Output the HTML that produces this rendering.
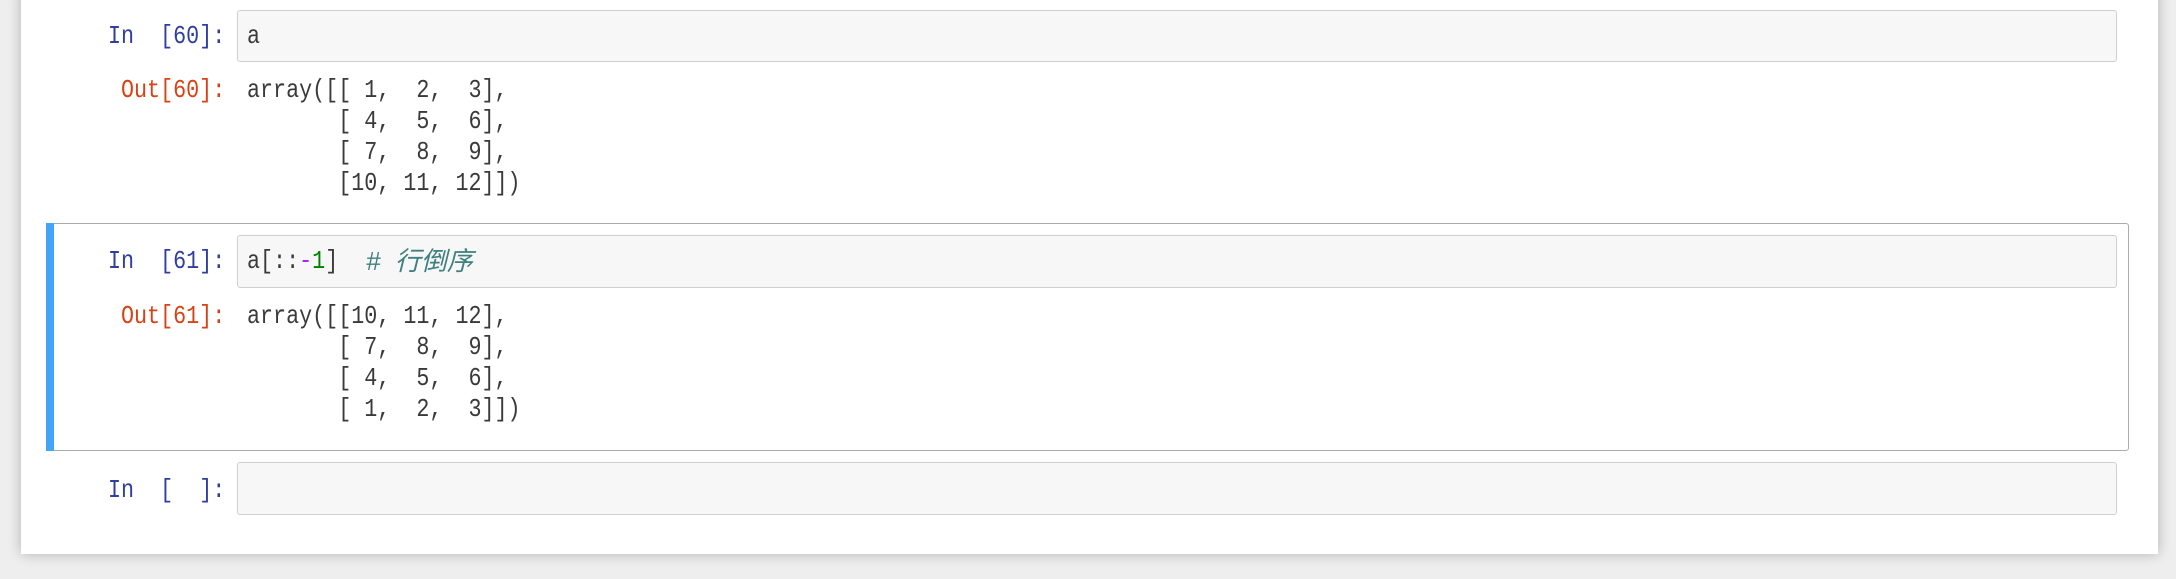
<!DOCTYPE html>
<html><head><meta charset="utf-8"><style>
html,body{margin:0;padding:0;width:2176px;height:579px;background:#eeeeee;overflow:hidden}
.panel{position:absolute;left:21px;top:-10px;width:2137px;height:564px;background:#fff;box-shadow:0 0 12px rgba(0,0,0,.25)}
.box{position:absolute;left:237px;width:1880px;background:#f7f7f7;border:1px solid #cfcfcf;border-radius:3px;box-sizing:border-box}
.sel{position:absolute;left:46px;top:223px;width:2083px;height:228px;border:1px solid #ababab;border-radius:3px;box-sizing:border-box}
.bar{position:absolute;left:46px;top:223px;width:8px;height:228px;background:#42a5f5}
.t{position:absolute;font:26px/32px "Liberation Mono","Noto Sans CJK SC",monospace;white-space:pre;transform:scaleX(.835);transform-origin:0 50%;color:#3a3a3a}
.in{color:#303f9f}.out{color:#d84315}
.c{position:absolute;font:italic 26px/32px "Liberation Sans","Noto Sans CJK SC",sans-serif;color:#408080;white-space:pre}
</style></head><body>
<div class="panel"></div>
<div class="box" style="top:10px;height:52px"></div>
<div class="t in" style="left:108px;top:20px">In  [60]:</div>
<div class="t" style="left:247px;top:20px">a</div>
<div class="t out" style="left:121px;top:74px">Out[60]:</div>
<div class="t" style="left:247px;top:74px">array([[ 1,  2,  3],</div>
<div class="t" style="left:247px;top:105px">       [ 4,  5,  6],</div>
<div class="t" style="left:247px;top:136px">       [ 7,  8,  9],</div>
<div class="t" style="left:247px;top:167px">       [10, 11, 12]])</div>

<div class="sel"></div><div class="bar"></div>
<div class="box" style="top:235px;height:53px"></div>
<div class="t in" style="left:108px;top:245px">In  [61]:</div>
<div class="t" style="left:247px;top:245px">a[::<span style="color:#aa22ff">-</span><span style="color:#008000">1</span>]</div>
<div class="c" style="left:366px;top:245px">#  行倒序</div>
<div class="t out" style="left:121px;top:300px">Out[61]:</div>
<div class="t" style="left:247px;top:300px">array([[10, 11, 12],</div>
<div class="t" style="left:247px;top:331px">       [ 7,  8,  9],</div>
<div class="t" style="left:247px;top:362px">       [ 4,  5,  6],</div>
<div class="t" style="left:247px;top:393px">       [ 1,  2,  3]])</div>

<div class="box" style="top:462px;height:53px"></div>
<div class="t in" style="left:108px;top:474px">In  [  ]:</div>
</body></html>
